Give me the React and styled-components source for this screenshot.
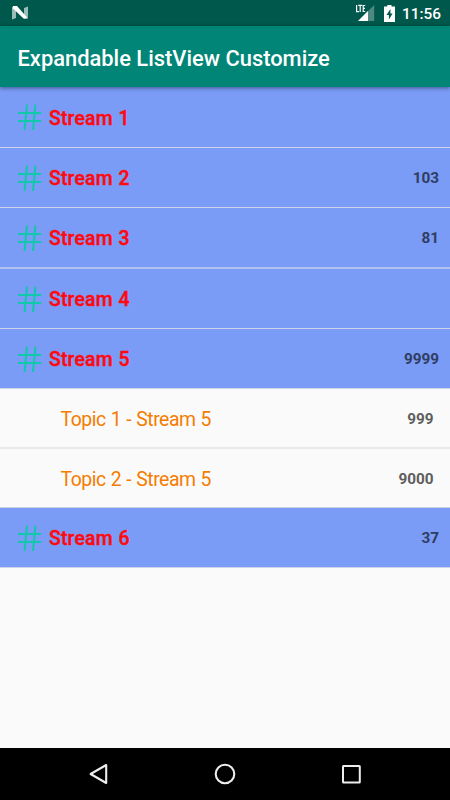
import React, { useState } from "react";
import styled, { createGlobalStyle } from "styled-components";

const GlobalStyle = createGlobalStyle`
  * {
    box-sizing: border-box;
  }
  body {
    margin: 0;
    font-family: Roboto, "Liberation Sans", sans-serif;
    background: #fafafa;
  }
`;

const Screen = styled.div`
  width: 450px;
  height: 800px;
  display: flex;
  flex-direction: column;
  background: #fafafa;
  overflow: hidden;
`;

const StatusBar = styled.div`
  flex: none;
  height: 26px;
  padding: 0 9px 0 11px;
  display: flex;
  align-items: center;
  background: #00574b;
  color: #fff;
`;

const StatusIcons = styled.div`
  margin-left: auto;
  display: flex;
  align-items: center;
`;

const Clock = styled.span`
  margin-left: 7px;
  padding-top: 2px;
  font-size: 15.4px;
  font-weight: 500;
  line-height: 20px;
`;

const Toolbar = styled.header`
  flex: none;
  height: 61px;
  padding: 3px 18px 0 17.5px;
  display: flex;
  align-items: center;
  background: #008577;
  box-shadow: 0 1px 4px rgba(0, 0, 0, 0.45);
  z-index: 1;
`;

const Title = styled.h1`
  margin: 0;
  font-size: 21.9px;
  font-weight: 500;
  color: #fff;
  white-space: nowrap;
`;

const List = styled.main`
  flex: 1;
`;

const GroupRow = styled.div`
  height: ${({ $height }) => $height}px;
  padding: 2px 11px 0 17px;
  display: flex;
  align-items: center;
  background: #7a9bf6;
  border-bottom: ${({ $thick }) => ($thick ? "2px solid #b2c0ec" : "1px solid #ced3e8")};
  cursor: pointer;
`;

const GroupName = styled.span`
  margin-left: 6px;
  font-size: 19.4px;
  font-weight: 500;
  letter-spacing: 0.2px;
  word-spacing: 0.6px;
  -webkit-text-stroke: 0.45px #ff0a10;
  color: #ff0a10;
`;

const TopicRow = styled.div`
  height: ${({ $height }) => $height}px;
  padding: 1px 16.5px 0 60.5px;
  display: flex;
  align-items: center;
  background: #fafafa;
  border-bottom: ${({ $last }) => ($last ? "1px solid #ccd2e6" : "2px solid #e9e9e9")};
`;

const TopicName = styled.span`
  padding-top: 1px;
  font-size: 19.4px;
  letter-spacing: -0.43px;
  word-spacing: 0.6px;
  color: #f57c00;
`;

const Count = styled.span`
  margin-left: auto;
  padding-bottom: ${({ $child }) => ($child ? 0 : 1)}px;
  font-size: 15.3px;
  font-weight: 700;
  color: ${({ $child }) => ($child ? "#5e5e5e" : "#303d62")};
`;

const NavBar = styled.nav`
  flex: none;
  height: 52px;
  padding: 0 87px 0 87px;
  display: flex;
  align-items: center;
  justify-content: space-between;
  background: #000;
`;

const NougatIcon = () => (
  <svg width="18" height="14" viewBox="0 0 18 14">
    <path d="M1 1.5 5 0v12L1 13.5zM13 2l4-1.5v11L13 13z" fill="#9abdb7" />
    <path d="M2 0h4l11 12.5h-4.5L1.5 2z" fill="#fff" />
  </svg>
);

const SignalIcon = () => (
  <svg width="20" height="18" viewBox="0 0 20 18">
    <path d="M19.2 1v16H3z" fill="#4d8981" />
    <path d="M13 7.1V17H3z" fill="#fff" />
    <path d="M0 0h10v9H0z" fill="#00574b" />
    <path
      d="M1.6 1v6.6H4M3.2 1.4h4M5.2 1.4V8M10.2 1.5H8.2v6h2M8.2 4.4h1.8"
      fill="none"
      stroke="#fff"
      strokeWidth="1.2"
    />
  </svg>
);

const BatteryIcon = () => (
  <svg width="11" height="17" viewBox="0 0 11 17" style={{ marginLeft: 8.5 }}>
    <path d="M3.3 0h4.2v1.6H11V17H0V1.6h3.3z" fill="#fff" />
    <path d="M6.4 4 2.5 10h2.4v4.4L8.6 8.5H6.4z" fill="#00574b" />
  </svg>
);

const HashIcon = () => (
  <svg width="26" height="28" viewBox="0 0 26 28">
    <path
      d="M10 0.7 7.6 26M18.4 0.7 16 26M1 9h23.2M1 17h23.2"
      fill="none"
      stroke="#10c8aa"
      strokeWidth="2"
    />
  </svg>
);

const BackIcon = () => (
  <svg width="24" height="24" viewBox="0 0 24 24">
    <path d="M19.2 3v18L3.6 12z" fill="none" stroke="#eee" strokeWidth="2.1" strokeLinejoin="round" />
  </svg>
);

const HomeIcon = () => (
  <svg width="24" height="24" viewBox="0 0 24 24">
    <circle cx="12" cy="12" r="9.3" fill="none" stroke="#eee" strokeWidth="2.1" />
  </svg>
);

const RecentIcon = () => (
  <svg width="24" height="24" viewBox="0 0 24 24">
    <rect x="4" y="4" width="16.8" height="16.4" rx="0.5" fill="none" stroke="#eee" strokeWidth="2" />
  </svg>
);

const streams = [
  { name: "Stream 1", height: 61, topics: [] },
  { name: "Stream 2", count: 103, height: 60, topics: [] },
  { name: "Stream 3", count: 81, height: 61, thick: true, topics: [] },
  { name: "Stream 4", height: 60, topics: [] },
  {
    name: "Stream 5",
    count: 9999,
    height: 60,
    topics: [
      { name: "Topic 1 - Stream 5", count: 999, height: 60 },
      { name: "Topic 2 - Stream 5", count: 9000, height: 59 },
    ],
  },
  { name: "Stream 6", count: 37, height: 60, topics: [] },
];

const App = () => {
  const [opened, setOpened] = useState("Stream 5");

  const toggle = (name) => {
    setOpened(opened === name ? null : name);
  };

  return (
    <>
      <GlobalStyle />
      <Screen>
        <StatusBar>
          <NougatIcon />
          <StatusIcons>
            <SignalIcon />
            <BatteryIcon />
            <Clock>11:56</Clock>
          </StatusIcons>
        </StatusBar>
        <Toolbar>
          <Title>Expandable ListView Customize</Title>
        </Toolbar>
        <List>
          {streams.map((stream) => (
            <React.Fragment key={stream.name}>
              <GroupRow
                $height={stream.height}
                $thick={stream.thick}
                onClick={() => toggle(stream.name)}
              >
                <HashIcon />
                <GroupName>{stream.name}</GroupName>
                <Count>{stream.count}</Count>
              </GroupRow>
              {opened === stream.name &&
                stream.topics.map((topic, index) => (
                  <TopicRow
                    key={topic.name}
                    $height={topic.height}
                    $last={index === stream.topics.length - 1}
                  >
                    <TopicName>{topic.name}</TopicName>
                    <Count $child>{topic.count}</Count>
                  </TopicRow>
                ))}
            </React.Fragment>
          ))}
        </List>
        <NavBar>
          <BackIcon />
          <HomeIcon />
          <RecentIcon />
        </NavBar>
      </Screen>
    </>
  );
};

export default App;
